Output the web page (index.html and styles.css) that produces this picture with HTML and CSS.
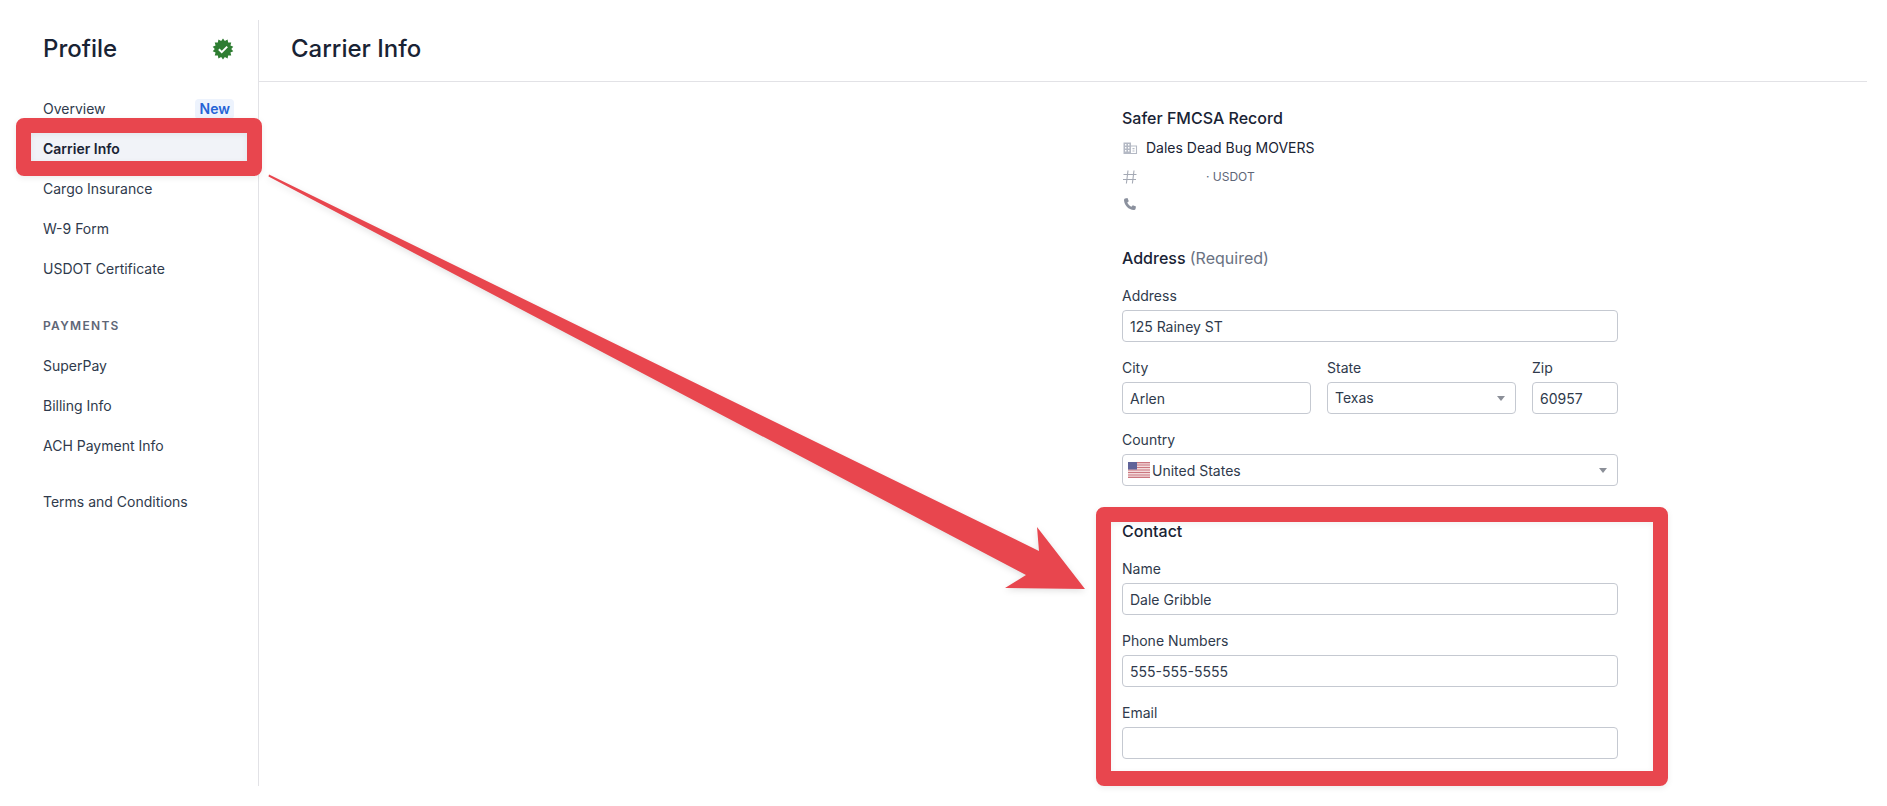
FILE: index.html
```html
<!DOCTYPE html>
<html lang="en">
<head>
  <meta charset="UTF-8">
  <meta name="viewport" content="width=device-width, initial-scale=1.0">
  <title>Carrier Info</title>
  <link rel="stylesheet" href="styles.css">
</head>
<body>
  <div class="page">
    <aside class="sidebar">
      <div class="sidebar-title">
        <h2>Profile</h2>
        <svg class="verified" viewBox="0 0 24 24" width="22" height="22">
          <polygon fill="#2e7d32" points="12,.5 14,3.23 17,1.64 17.61,4.96 20.99,4.83 20.11,8.09 23.21,9.44 21,12 23.21,14.56 20.11,15.91 20.99,19.17 17.61,19.04 17,22.36 14,20.77 12,23.5 10,20.77 7,22.36 6.39,19.04 3.01,19.17 3.89,15.91 .79,14.56 3,12 .79,9.44 3.89,8.09 3.01,4.83 6.39,4.96 7,1.64 10,3.23"/>
          <path d="M7.5 12.3l3.1 3.1 6-6" fill="none" stroke="#fff" stroke-width="2.2"/>
        </svg>
      </div>
      <nav class="nav">
        <a class="nav-item">Overview <span class="tag">New</span></a>
        <a class="nav-item active">Carrier Info</a>
        <a class="nav-item">Cargo Insurance</a>
        <a class="nav-item">W-9 Form</a>
        <a class="nav-item">USDOT Certificate</a>
        <div class="nav-heading">PAYMENTS</div>
        <a class="nav-item">SuperPay</a>
        <a class="nav-item">Billing Info</a>
        <a class="nav-item">ACH Payment Info</a>
        <a class="nav-item nav-terms">Terms and Conditions</a>
      </nav>
    </aside>

    <main class="main">
      <header class="main-header">
        <h1>Carrier Info</h1>
      </header>
      <form class="form">
        <h3 class="section-title">Safer FMCSA Record</h3>
        <div class="record-row">
          <svg class="record-icon" viewBox="0 0 16 16" width="16" height="16">
            <path fill="#b4b9c4" d="M1.5 2.5h7.5v11.5H1.5z"/>
            <path fill="#fff" d="M3 4h1.4v1.4H3zM6 4h1.4v1.4H6zM3 7h1.4v1.4H3zM6 7h1.4v1.4H6zM3 10h1.4v1.4H3zM6 10h1.4v1.4H6z"/>
            <path fill="none" stroke="#b4b9c4" stroke-width="1.1" d="M9 6h5.5v7.5H9"/>
            <path fill="#b4b9c4" d="M10.5 8h2v1.2h-2zM10.5 10.4h2v1.2h-2z"/>
          </svg>
          <span>Dales Dead Bug MOVERS</span>
        </div>
        <div class="record-row record-small">
          <svg class="record-icon" viewBox="0 0 16 16" width="16" height="16">
            <path fill="none" stroke="#a4a9b4" stroke-width="1.1" d="M6 1.500L4.400 14.500M12 1.500L10.400 14.500M1.500 5.500h13M1 10.500h13"/>
          </svg>
          <span class="usdot">· USDOT</span>
        </div>
        <div class="record-row">
          <svg class="record-icon" viewBox="0 0 16 16" width="16" height="16">
            <path fill="#8b919e" d="M3 2.500L5.500 2L6.800 5.200L5.300 6.600C6 8.300 7.700 10 9.400 10.700L10.800 9.200L14 10.500L13.500 13C13.200 13.800 12.500 14 11.800 14C6.500 13.500 2.500 9.500 2 4.200C2 3.500 2.300 2.800 3 2.500Z"/>
          </svg>
        </div>

        <h3 class="section-title section-address">Address <span class="muted">(Required)</span></h3>
        <div class="field">
          <label>Address</label>
          <div class="input">125 Rainey ST</div>
        </div>
        <div class="field-row">
          <div class="field">
            <label>City</label>
            <div class="input">Arlen</div>
          </div>
          <div class="field">
            <label>State</label>
            <div class="input select select-state">Texas</div>
          </div>
          <div class="field">
            <label>Zip</label>
            <div class="input">60957</div>
          </div>
        </div>
        <div class="field">
          <label>Country</label>
          <div class="input select country">
            <svg class="flag" viewBox="0 0 22 16" width="22" height="16">
              <rect width="22" height="16" fill="#f3dcdc"/>
              <path stroke="#cb7780" stroke-width="1.2" d="M0 .6h22M0 3h22M0 5.500h22M0 8h22M0 10.500h22M0 13h22M0 15.400h22"/>
              <rect width="9" height="7.500" fill="#5f6399"/>
            </svg>
            United States
          </div>
        </div>

        <h3 class="section-title section-contact">Contact</h3>
        <div class="field">
          <label>Name</label>
          <div class="input">Dale Gribble</div>
        </div>
        <div class="field">
          <label>Phone Numbers</label>
          <div class="input">555-555-5555</div>
        </div>
        <div class="field">
          <label>Email</label>
          <div class="input"></div>
        </div>
      </form>
    </main>
  </div>

  <!-- red markup drawn over the screenshot -->
  <div class="callout callout-nav"></div>
  <div class="callout callout-contact"></div>
  <svg class="callout-arrow" viewBox="0 0 1887 806" width="1887" height="806">
    <polygon fill="#e8464e" points="269,174.500 1039,551 1037,527 1085,589 1005,588 1026,575 268.500,176.500"/>
  </svg>
</body>
</html>
```

FILE: styles.css
```css
* {
  box-sizing: border-box;
  margin: 0;
  padding: 0;
}
html, body {
  height: 806px;
  overflow: hidden;
}
body {
  background-color: #fff;
  color: #192334;
  font-family: 'Inter', 'Liberation Sans', sans-serif;
  font-size: 14px;
  line-height: 20px;
  position: relative;
}
.page {
  display: flex;
  height: 766px;
  margin: 20px 20px 0 0;
}
.sidebar {
  width: 259px;
  flex-shrink: 0;
  border-right: 1px solid #e2e2e6;
  padding-left: 43px;
}
.sidebar-title {
  display: flex;
  align-items: center;
  justify-content: space-between;
  height: 40px;
  padding-right: 24px;
  margin-top: 9px;
}
.sidebar-title h2 {
  font-size: 24px;
  font-weight: 500;
  line-height: 40px;
}
.nav {
  margin-top: 20px;
  padding-right: 24px;
}
.nav-item {
  display: flex;
  align-items: center;
  justify-content: space-between;
  height: 40px;
  color: #2f3a4c;
}
.nav-item.active {
  color: #192334;
  font-weight: 600;
  background-color: #f1f3f8;
  margin: 0 -13px 0 -12px;
  padding: 0 13px 0 12px;
}
.tag {
  color: #2563d6;
  background-color: #edf3fd;
  border-radius: 4px;
  font-weight: 600;
  padding: 0 4px 0 5px;
}
.nav-heading {
  margin-top: 17px;
  height: 40px;
  line-height: 40px;
  font-size: 12px;
  font-weight: 600;
  letter-spacing: 1.3px;
  color: #5e6677;
}
.nav-terms {
  margin-top: 16px;
}
.main {
  flex: 1;
}
.main-header {
  height: 62px;
  border-bottom: 1px solid #e2e2e6;
  padding-left: 32px;
}
.main-header h1 {
  font-size: 24px;
  font-weight: 500;
  line-height: 48px;
  padding-top: 5px;
}
.form {
  width: 496px;
  margin-left: 863px;
  padding-top: 26px;
}
.section-title {
  font-size: 16px;
  font-weight: 500;
  line-height: 20px;
}
.section-address {
  margin-top: 30px;
  margin-bottom: 18px;
}
.section-contact {
  margin-top: 35px;
  margin-bottom: 18px;
}
.muted {
  color: #6a7282;
  font-weight: 400;
}
.record-row {
  display: flex;
  align-items: center;
  gap: 8px;
  height: 28px;
}
.section-title + .record-row {
  margin-top: 6px;
}
.record-small {
  font-size: 12px;
  color: #5e6677;
  padding-top: 2px;
}
.usdot {
  margin-left: 60px;
}
.field {
  margin-bottom: 16px;
}
.field label {
  display: block;
  margin-bottom: 4px;
  color: #2f3a4c;
}
.field-row {
  display: grid;
  grid-template-columns: 189px 189px 86px;
  gap: 16px;
  margin-bottom: 16px;
}
.field-row .field {
  margin-bottom: 0;
}
.input {
  height: 32px;
  display: flex;
  align-items: center;
  border: 1px solid #c5c9d1;
  border-radius: 4px;
  padding: 2px 7px 0;
  color: #2f3a4c;
  position: relative;
}
.select::after {
  content: "";
  position: absolute;
  right: 10px;
  top: 13px;
  border-left: 4.5px solid transparent;
  border-right: 4.5px solid transparent;
  border-top: 5px solid #8b8f98;
}
.select-state {
  padding-top: 0;
}
.country {
  padding-left: 5px;
  gap: 2px;
}
.flag {
  margin-top: -2px;
}
.callout {
  position: absolute;
  border-style: solid;
  border-color: #e8464e;
  border-radius: 8px;
  box-shadow: 0 2px 6px rgba(0,0,0,0.08), inset 0 2px 6px rgba(0,0,0,0.06);
}
.callout-nav {
  left: 16px;
  top: 118px;
  width: 246px;
  height: 58px;
  border-width: 15px;
}
.callout-contact {
  left: 1096px;
  top: 507px;
  width: 572px;
  height: 279px;
  border-width: 15px;
}
.callout-arrow {
  position: absolute;
  left: 0;
  top: 0;
  filter: drop-shadow(0 2px 3px rgba(0,0,0,0.12));
}
```
